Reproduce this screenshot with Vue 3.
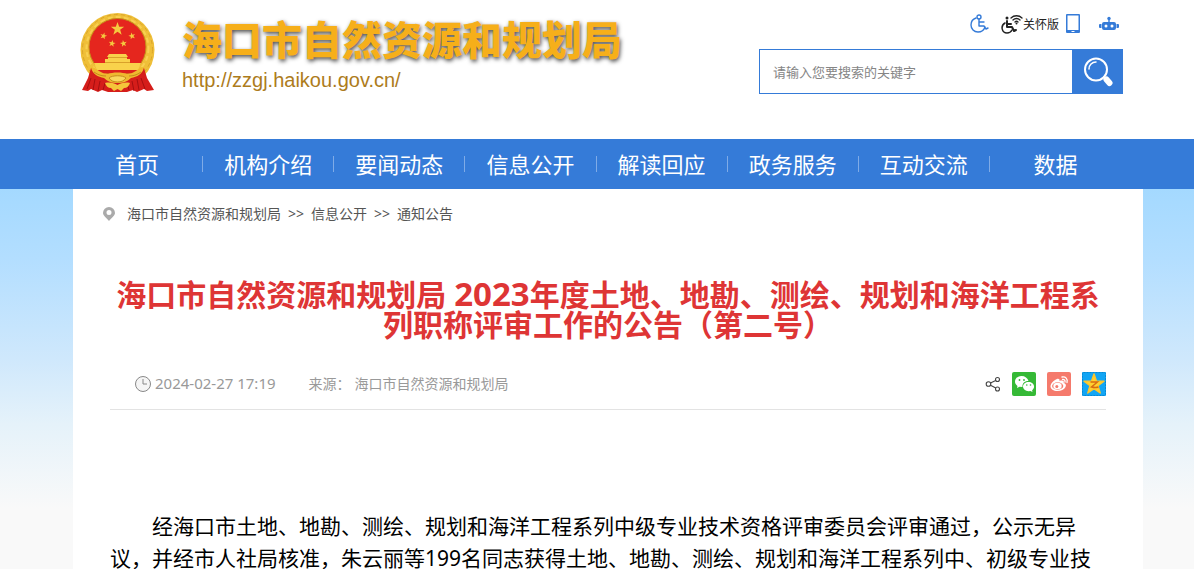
<script setup>
import { ref } from 'vue'

const keyword = ref('')
const navItems = ['首页', '机构介绍', '要闻动态', '信息公开', '解读回应', '政务服务', '互动交流', '数据']
const crumbs = ['海口市自然资源和规划局', '信息公开', '通知公告']
// centre x, centre y, scale, rotation of the stars in the emblem
const stars = [
  [37.5, 17, 7, 0],
  [23.5, 24, 3.6, 15],
  [52, 24, 3.6, -15],
  [32, 31.5, 3.6, 10],
  [43.5, 31.5, 3.6, -10],
]
const starPoints = '0,-1 .24,-.32 .95,-.31 .38,.12 .59,.81 0,.4 -.59,.81 -.38,.12 -.95,-.31 -.24,-.32'
</script>

<template>
  <div class="page">
    <header class="header">
      <a class="brand" href="#">
        <svg class="emblem" viewBox="0 0 76 82" aria-hidden="true">
          <circle cx="37.500" cy="38" r="37" fill="#efbf38" />
          <circle cx="37.500" cy="37.500" r="35" fill="none" stroke="#dba52a" stroke-width="1" stroke-dasharray="4 3" />
          <circle cx="37.500" cy="36" r="31" fill="none" stroke="#f8d052" stroke-width="2" stroke-dasharray="5 3" />
          <circle cx="37.500" cy="35" r="28.500" fill="#e5261e" stroke="#c58b1b" />
          <path d="M11 56c5 1 8 4 14 6h25c6-2 9-5 14-6l3 10 7 12-7 1-3-2-7 3-4-2-6 2H28l-6-2-4 2-7-3-3 2-6-1 6-12z" fill="#d51d1a" />
          <path d="M11 66 7 77m8-10-2 11m7-9-2 10m7-8-2 7m38-12 4 11m-8-10 2 11m-7-9 2 10m-7-8 2 7" stroke="#a50f10" stroke-width="1" />
          <polygon
            v-for="(s, i) in stars"
            :key="i"
            :points="starPoints"
            :transform="`translate(${s[0]} ${s[1]}) scale(${s[2]}) rotate(${s[3]})`"
            fill="#f5c93f"
          />
          <path d="M29 42h17l2 3H27zM28 45h19v2h3v4h11l-3 7H17l-3-7h11v-4h3z" fill="#f9d24b" />
          <path d="M28 45.500h19M25 50.500h25" stroke="#d9a12a" />
          <path d="M17 58h41l-4 4-9-1-7.500 2-7.500-2-9 1z" fill="#dd211c" />
          <path d="M11 55c7 1 9 7 17 7 4-2 15-2 19 0 8 0 10-6 17-7-1 7-7 10-13 11-4 4-8 5-13.500 5S28 70 24 66c-6-1-12-4-13-11z" fill="#efb92f" />
          <path d="M29 66c3-3 14-3 17 0-2 3-5 4-8.500 4S31 69 29 66z" fill="#f9d75c" stroke="#c58c1d" />
          <path d="M14 60c4 3 8 4 12 4M61 60c-4 3-8 4-12 4" fill="none" stroke="#c48c1c" />
          <path d="M25 71c5-1 9 0 12.500 2 3.500-2 7.500-3 12.500-2-1 3-3 5-6 5l-3 3-3.500-2-3.500 2-3-3c-3 0-5-2-6-5z" fill="#f4c53a" />
        </svg>
        <span class="brand-text">
          <span class="brand-name">海口市自然资源和规划局</span>
          <span class="brand-url">http://zzgj.haikou.gov.cn/</span>
        </span>
      </a>

      <div class="header-side">
        <div class="tools">
          <a href="#" class="tool" aria-label="无障碍">
            <svg width="20" height="20" viewBox="0 0 20 20" fill="none" stroke="#357bd8" stroke-width="1.400" stroke-linecap="round" stroke-linejoin="round">
              <circle cx="9" cy="3" r="2" />
              <path d="M9 5v7h5l2 3 2-1M9 8h5M6 4C3 5 1 8 1 11c0 4 3 7 7 7 3 0 6-2 7-5" />
            </svg>
          </a>
          <a href="#" class="tool care">
            <svg width="22" height="20" viewBox="0 0 22 20" fill="none" stroke="#222" stroke-width="2" stroke-linecap="round" stroke-linejoin="round">
              <circle cx="6" cy="4" r="1.500" fill="#222" stroke="none" />
              <path d="M6 7v6h5l2 4 2-1M6 10h4" />
              <path d="M4 9c-5 3-3 10 2 10 3 0 4-1 5-3" stroke-width="1.500" />
              <path d="M10 4c3-3 8-3 11 0M12 6c2-2 5-2 7 0M14 8c1-1 2-1 3 0" stroke-width="1.300" />
              <circle cx="15.500" cy="9.500" r="1" fill="#222" stroke="none" />
            </svg>
            <span>关怀版</span>
          </a>
          <a href="#" class="tool phone" aria-label="手机版">
            <svg width="16" height="20" viewBox="0 0 16 20">
              <path d="M2 0h12q1 0 1 1v17q0 1-1 1H2q-1 0-1-1V1q0-1 1-1zm.500 1.500V16h11V1.500zM6.500 17v1h3v-1z" fill="#357bd8" fill-rule="evenodd" />
            </svg>
          </a>
          <a href="#" class="tool robot" aria-label="智能问答">
            <svg width="20" height="16" viewBox="0 0 20 16" fill="#357bd8">
              <circle cx="10" cy="2.500" r="1.700" />
              <path d="M9.300 3h1.400v4H9.300zM1 8h1.500v4H1q-1 0-1-1V9q0-1 1-1zM17.500 8H19q1 0 1 1v2q0 1-1 1h-1.500zM5 6h10q2 0 2 2v4q0 2-2 2H5q-2 0-2-2V8q0-2 2-2z" />
              <circle cx="7" cy="10" r="1.500" fill="#fff" />
              <circle cx="13" cy="10" r="1.500" fill="#fff" />
            </svg>
          </a>
        </div>
        <form class="search" @submit.prevent>
          <input v-model="keyword" type="text" placeholder="请输入您要搜索的关键字" aria-label="搜索关键字">
          <button type="submit" aria-label="搜索">
            <svg width="30" height="30" viewBox="0 0 30 30" fill="none" stroke="#fff" stroke-linecap="round">
              <circle cx="13" cy="12.500" r="11" stroke-width="2" />
              <path d="M6 12c0-4 3-7 7-7" stroke-width="1.500" />
              <path d="m21 20 2 2" stroke-width="2" />
              <path d="m23.500 22.500 3 3.500" stroke-width="6" />
            </svg>
          </button>
        </form>
      </div>
    </header>

    <nav class="nav">
      <ul>
        <li v-for="item in navItems" :key="item"><a href="#">{{ item }}</a></li>
      </ul>
    </nav>

    <div class="backdrop">
      <main class="content">
        <div class="crumbs">
          <svg width="12" height="14" viewBox="0 0 12 14">
            <path d="M6 0a6 6 0 0 1 6 6c0 3-4 5-6 8-2-3-6-5-6-8a6 6 0 0 1 6-6zm0 3a2.500 2.500 0 1 0 0 5 2.500 2.500 0 0 0 0-5z" fill="#aaa" fill-rule="evenodd" />
          </svg>
          <template v-for="(crumb, i) in crumbs" :key="crumb">
            <span v-if="i" class="sep">&gt;&gt;</span>
            <a href="#">{{ crumb }}</a>
          </template>
        </div>

        <article class="article">
          <h1>海口市自然资源和规划局 <span class="year">2023</span>年度土地、地勘、测绘、规划和海洋工程系列职称评审工作的公告（第二号）</h1>
          <div class="meta">
            <svg width="16" height="16" viewBox="0 0 16 16" fill="none" stroke="#888">
              <circle cx="8" cy="8" r="7.500" fill="#f5f5f5" />
              <path d="M8 3v5h4" />
            </svg>
            <time>2024-02-27 17:19</time>
            <span class="source">来源：</span>
            <span>海口市自然资源和规划局</span>
            <div class="share">
              <a href="#" aria-label="分享">
                <svg width="16" height="16" viewBox="0 0 16 16" fill="none" stroke="#444" stroke-width="1.100">
                  <circle cx="3.500" cy="8" r="2.300" />
                  <circle cx="12.500" cy="3.500" r="2" />
                  <circle cx="12.500" cy="13" r="2" />
                  <path d="m5.500 7 5.200-2.600M5.500 9.200l5.300 2.800" />
                </svg>
              </a>
              <a href="#" aria-label="微信">
                <svg width="24" height="24" viewBox="0 0 24 24">
                  <rect width="24" height="24" rx="2" fill="#35b936" />
                  <path d="M9.500 4C5.900 4 3 6.300 3 9.500c0 2 1 3.400 2.500 4.400L5 16l2.500-1.300 3 .3c-.5-4 3-6.200 6-6-.8-3-3.500-5-7-5z" fill="#fff" />
                  <path d="M16.500 10c-3 0-5.500 2-5.500 4.600s2.500 4.600 5.500 4.600l2-.3 2 1.100-.4-1.800c1.200-.8 2-2.100 2-3.600 0-2.600-2.600-4.600-5.600-4.600z" fill="#fff" />
                  <g fill="#35b936">
                    <circle cx="7.500" cy="8" r=".9" /><circle cx="12" cy="8" r=".9" />
                    <circle cx="14.800" cy="13" r=".8" /><circle cx="18.500" cy="13" r=".8" />
                  </g>
                </svg>
              </a>
              <a href="#" aria-label="微博">
                <svg width="24" height="24" viewBox="0 0 24 24">
                  <rect width="24" height="24" rx="2" fill="#f57a6c" />
                  <path d="M10 7c1.500-.5 3 0 2.500 2 2.500-1 5-.5 4.200 2 2 .6 2.800 2 1.800 4-1.300 2.600-4.500 4-8 4-4 0-7-2-7-4.800C3.500 11.500 7 8 10 7z" fill="#fff" />
                  <ellipse cx="10.700" cy="14" rx="5.600" ry="3.700" fill="#f57a6c" />
                  <ellipse cx="10.500" cy="14" rx="4.200" ry="3.200" fill="#fff" />
                  <circle cx="9.800" cy="14.500" r="1.500" fill="#f57a6c" />
                  <path d="M15 5c3.500-.7 6 1.800 5 5.500M15.500 7.500c1.800-.2 2.800.8 2.500 2.500" fill="none" stroke="#fff" stroke-width="1.300" stroke-linecap="round" />
                </svg>
              </a>
              <a href="#" aria-label="QQ空间">
                <svg width="24" height="24" viewBox="0 0 24 24">
                  <rect width="24" height="24" rx="1" fill="#12a5f4" />
                  <rect x=".5" y=".5" width="23" height="23" rx="1" fill="none" stroke="#0788d2" stroke-dasharray="2 1" />
                  <polygon :points="starPoints" transform="translate(12 12.500) scale(10.500)" fill="#fed130" stroke="#fdc52c" stroke-width=".14" stroke-linejoin="round" />
                  <path d="M8.500 10h7L9.500 15q4 1 7 0" fill="none" stroke="#d96b12" stroke-width="1.400" />
                </svg>
              </a>
            </div>
          </div>
          <p>经海口市土地、地勘、测绘、规划和海洋工程系列中级专业技术资格评审委员会评审通过，公示无异议，并经市人社局核准，朱云丽等199名同志获得土地、地勘、测绘、规划和海洋工程系列中、初级专业技</p>
        </article>
      </main>
    </div>
  </div>
</template>

<style>
html,
body {
  height: 100%;
  overflow: hidden;
}
#app {
  height: 100%;
}
</style>

<style scoped>
.page {
  display: flex;
  flex-direction: column;
  height: 100%;
  overflow: hidden;
  background: #fff;
  font-family: "Noto Sans", "Noto Sans CJK SC", sans-serif;
}
a {
  color: inherit;
  text-decoration: none;
}
svg {
  display: block;
  flex: none;
}
.header {
  display: flex;
  flex: none;
  justify-content: space-between;
  box-sizing: border-box;
  height: 139px;
  padding: 12px 71px 0 80px;
}
.brand {
  display: flex;
  align-items: flex-start;
  gap: 26px;
}
.emblem {
  width: 76px;
  height: 82px;
}
.brand-text {
  display: flex;
  flex-direction: column;
}
.brand-name {
  color: #f6af1a;
  font-size: 40px;
  font-weight: 900;
  line-height: 56px;
  text-shadow: 1px 2px 4px rgba(0, 0, 0, 0.7);
}
.brand-url {
  color: #ad7c1c;
  font-family: "Liberation Sans", sans-serif;
  font-size: 20px;
  line-height: 24px;
}
.header-side {
  width: 364px;
}
.tools {
  display: flex;
  align-items: center;
  justify-content: flex-end;
  height: 24px;
  padding-right: 4px;
}
.care {
  display: flex;
  align-items: center;
  margin-left: 11px;
  color: #222;
  font-size: 12px;
}
.phone {
  margin-left: 6px;
}
.robot {
  margin-left: 18px;
}
.search {
  display: flex;
  height: 45px;
  margin-top: 13px;
}
.search input {
  flex: 1;
  min-width: 0;
  box-sizing: border-box;
  padding: 0 13px;
  border: 1px solid #357bd8;
  border-right: 0;
  outline: none;
  font-family: inherit;
  font-size: 13px;
}
.search input::placeholder {
  color: #858585;
}
.search button {
  display: flex;
  align-items: center;
  justify-content: center;
  width: 51px;
  padding: 0;
  border: 0;
  background: #357bd8;
  cursor: pointer;
}
.nav {
  flex: none;
  padding: 0 73px 0 72px;
  background: #357bd8;
}
.nav ul {
  display: flex;
  margin: 0;
  padding: 0;
  list-style: none;
}
.nav li {
  display: flex;
  flex: 1;
  align-items: center;
  justify-content: center;
  height: 50px;
  color: #fff;
  font-size: 22px;
  white-space: nowrap;
}
.nav a {
  flex: 1;
  padding-bottom: 2px;
  text-align: center;
}
.nav li:not(:last-child)::after {
  width: 1px;
  height: 16px;
  background: #7fabe7;
  content: "";
}
.backdrop {
  flex: 1;
  min-height: 0;
  padding: 0 51px 0 73px;
  background: linear-gradient(#a4d9ff 0, #b3deff 70px, #cfe8fc 170px, #e5f2fa 235px, #f9f9f9 320px);
}
.content {
  height: 100%;
  background: #fff;
}
.crumbs {
  display: flex;
  align-items: center;
  height: 50px;
  padding-left: 30px;
  color: #555;
  font-size: 14px;
}
.crumbs a,
.crumbs span,
.meta time,
.meta span {
  padding-bottom: 2px;
}
.crumbs svg {
  margin-right: 12px;
}
.sep {
  margin: 0 7px;
}
.article {
  padding: 41px 37px 0;
}
h1 {
  margin: 0;
  color: #de3535;
  font-size: 30px;
  font-weight: 700;
  line-height: 30px;
  text-align: center;
}
.year {
  font-size: 33px;
  line-height: 0;
}
.meta {
  display: flex;
  align-items: center;
  height: 50px;
  margin-top: 19px;
  padding-left: 25px;
  border-bottom: 1px solid #e3e3e3;
  color: #999;
  font-size: 14px;
}
.meta time {
  margin-left: 4px;
  font-size: 15px;
}
.meta .source {
  margin: 0 4px 0 33px;
}
.share {
  display: flex;
  align-items: center;
  gap: 11px;
  margin-left: auto;
}
.article p {
  margin: 100px 0 0;
  color: #000;
  font-size: 21px;
  line-height: 32px;
  text-indent: 2em;
}
</style>
